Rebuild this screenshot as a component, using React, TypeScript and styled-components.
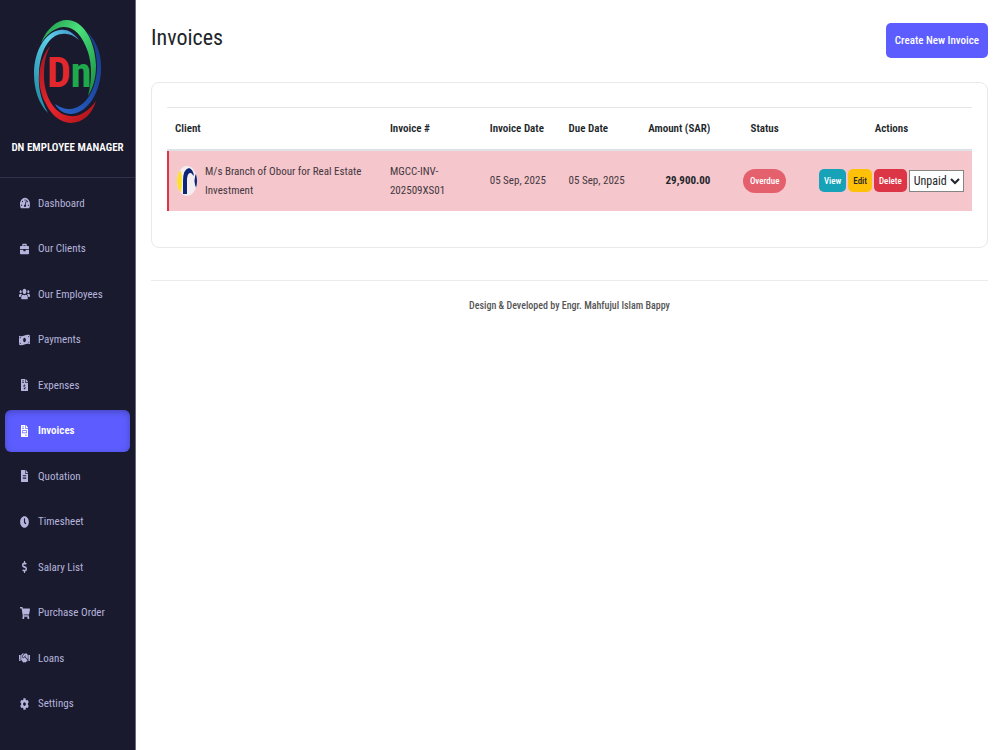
import React from 'react';
import styled, { createGlobalStyle, css } from 'styled-components';
import type { IconType } from 'react-icons';
import {
  FaTachometerAlt,
  FaBriefcase,
  FaUsers,
  FaMoneyBillWave,
  FaFileInvoiceDollar,
  FaFileInvoice,
  FaFileAlt,
  FaClock,
  FaDollarSign,
  FaShoppingCart,
  FaHandshake,
  FaCog,
} from 'react-icons/fa';

const GlobalStyle = createGlobalStyle`
  *, *::before, *::after { box-sizing: border-box; }
  body {
    margin: 0;
    background: #fff;
    color: #212529;
    font-family: 'Roboto Condensed', Roboto, sans-serif;
    font-size: 11px;
    line-height: 19px;
  }
  button, select { font-family: inherit; }
`;

const Shell = styled.div`
  display: flex;
  min-height: 100vh;
`;

const Sidebar = styled.aside`
  display: flex;
  flex-direction: column;
  flex: 0 0 136px;
  background: #1a1a2e;
  border-right: 1px solid #6c6c78;
`;

const Brand = styled.div`
  display: flex;
  flex-direction: column;
  align-items: center;
  gap: 13px;
  height: 178px;
  padding-top: 20px;
  border-bottom: 1px solid #30304a;
`;

const BrandName = styled.div`
  color: #fff;
  line-height: 24px;
  font-weight: 600;
  white-space: nowrap;
`;

const Nav = styled.nav`
  display: flex;
  flex: 1;
  flex-direction: column;
  justify-content: space-between;
  padding: 4px 5px 25px;
`;

const NavLink = styled.a<{ $active?: boolean }>`
  display: flex;
  align-items: center;
  gap: 8px;
  height: 42px;
  padding-left: 14px;
  border-radius: 6px;
  color: #b4b4dc;
  text-decoration: none;
  ${({ $active }) =>
    $active &&
    css`
      background: #5d5dff;
      box-shadow: inset 0 2px 6px rgba(0, 0, 0, 0.25);
      color: #fff;
      font-weight: 600;
    `}
`;

const IconSlot = styled.span<{ $width: number }>`
  display: flex;
  justify-content: center;
  width: 11px;

  svg {
    width: ${({ $width }) => $width}px;
    height: 12px;
  }
`;

const Main = styled.main`
  flex: 1;
  min-width: 0;
  padding: 23px 12px 23px 15px;
`;

const PageHeader = styled.header`
  display: flex;
  justify-content: space-between;
  align-items: flex-start;
  margin-bottom: 24px;
`;

const Title = styled.h1`
  margin: 0;
  font-size: 22px;
  line-height: 29px;
  font-weight: 400;
`;

const PrimaryButton = styled.button`
  height: 35px;
  padding: 0 9px;
  border: 0;
  border-radius: 5px;
  background: #5d5dff;
  color: #fff;
  font-size: 11px;
  font-weight: 500;
`;

const Card = styled.section`
  padding: 24px 15px 36px;
  border: 1px solid #e9e9ec;
  border-radius: 8px;
`;

const Table = styled.table`
  width: 100%;
  border-collapse: collapse;
  table-layout: fixed;
`;

type Align = 'left' | 'right' | 'center';

const HeadCell = styled.th<{ $align?: Align; $width?: string }>`
  width: ${({ $width = 'auto' }) => $width};
  height: 42px;
  padding: 0 8px;
  border-top: 1px solid #e3e5e8;
  border-bottom: 2px solid #dee2e6;
  font-weight: 600;
  text-align: ${({ $align = 'left' }) => $align};
  white-space: nowrap;
`;

const Cell = styled.td<{ $align?: Align; $strong?: boolean }>`
  height: 61px;
  padding: 0 8px;
  background: #f5c6cb;
  color: ${({ $strong }) => ($strong ? '#212529' : '#43383f')};
  font-weight: ${({ $strong }) => ($strong ? 700 : 400)};
  text-align: ${({ $align = 'left' }) => $align};
  white-space: nowrap;

  &:first-child { box-shadow: inset 2px 0 #dc3545; }
`;

const Client = styled.div`
  display: flex;
  align-items: center;
  gap: 8px;
  padding-left: 2px;

  svg { flex-shrink: 0; }
`;

const Badge = styled.span`
  display: inline-block;
  padding: 0 7px;
  border-radius: 12px;
  background: #e4606d;
  color: #fff;
  font-size: 9px;
  line-height: 24px;
  font-weight: 500;
`;

const Actions = styled.div`
  display: flex;
  align-items: center;
  gap: 2px;
`;

const ActionButton = styled.button<{ $bg: string; $fg?: string }>`
  height: 23px;
  padding: 0 5px;
  border: 0;
  border-radius: 5px;
  background: ${({ $bg }) => $bg};
  color: ${({ $fg = '#fff' }) => $fg};
  font-size: 9px;
  font-weight: 500;
`;

const StatusSelect = styled.select`
  width: 57px;
  height: 22px;
  padding: 0;
  border: 1px solid #858585;
  border-radius: 0;
  background: #fff;
  color: #212529;
  font-size: 12px;
`;

const Footer = styled.footer`
  margin-top: 32px;
  padding-top: 15px;
  border-top: 1px solid #e9ebed;
  color: #555;
  font-size: 10px;
  font-weight: 500;
  text-align: center;
`;

const navItems: { label: string; icon: IconType; width: number }[] = [
  { label: 'Dashboard', icon: FaTachometerAlt, width: 10 },
  { label: 'Our Clients', icon: FaBriefcase, width: 9 },
  { label: 'Our Employees', icon: FaUsers, width: 11 },
  { label: 'Payments', icon: FaMoneyBillWave, width: 11 },
  { label: 'Expenses', icon: FaFileInvoiceDollar, width: 7 },
  { label: 'Invoices', icon: FaFileInvoice, width: 7 },
  { label: 'Quotation', icon: FaFileAlt, width: 7 },
  { label: 'Timesheet', icon: FaClock, width: 9 },
  { label: 'Salary List', icon: FaDollarSign, width: 5 },
  { label: 'Purchase Order', icon: FaShoppingCart, width: 10 },
  { label: 'Loans', icon: FaHandshake, width: 11 },
  { label: 'Settings', icon: FaCog, width: 9 },
];

const BrandLogo = () => (
  <svg width="68" height="103" viewBox="0 0 68 103" role="img" aria-label="DN logo">
    <defs>
      <linearGradient id="green" x1="0" y1="0" x2="1" y2="1">
        <stop offset="0" stopColor="#1c8f45" />
        <stop offset="0.4" stopColor="#4be07c" />
        <stop offset="1" stopColor="#128a3c" />
      </linearGradient>
      <linearGradient id="cyan" x1="1" y1="0" x2="0" y2="1">
        <stop offset="0" stopColor="#3d8fc4" />
        <stop offset="0.4" stopColor="#5fd0ea" />
        <stop offset="1" stopColor="#127f96" />
      </linearGradient>
      <linearGradient id="red" x1="0" y1="0" x2="1" y2="1">
        <stop offset="0" stopColor="#a01420" />
        <stop offset="0.5" stopColor="#e8262c" />
        <stop offset="1" stopColor="#a81218" />
      </linearGradient>
      <linearGradient id="blue" x1="1" y1="0" x2="0" y2="1">
        <stop offset="0" stopColor="#163a86" />
        <stop offset="0.6" stopColor="#2050b0" />
        <stop offset="1" stopColor="#2b66c8" />
      </linearGradient>
    </defs>
    <path d="M53 12C63 21 68 35 67 52C65 78 50 94 37 94C30 94 24 90 21 84C27 88 31 89 36 89C50 88 62 72 63 48C63 34 60 22 53 12Z" fill="url(#blue)" />
    <path d="M16 26C3 42 2 66 12 84C17 94 25 102 36 103C49 103 58 94 62 81C54 92 45 97 36 96C21 95 9 76 10 53C10 42 12 35 16 26Z" fill="url(#red)" />
    <path d="M7 23C13 8 23 0 33 0C49 0 61 20 62 45C62 59 59 68 54 76C58 60 58 45 54 32C48 15 40 6 29 7C20 8 13 14 7 23Z" fill="url(#green)" />
    <path d="M45 20C38 11 32 9 26 10C11 12 0 31 0 54C0 70 5 84 14 93C6 78 4 66 5 53C6 31 15 15 28 14C34 13 39 15 45 20Z" fill="url(#cyan)" />
    <text x="13" y="67" fontSize="42" fontWeight="700">
      <tspan fill="#e2272d">D</tspan>
      <tspan fill="#1fa84c">n</tspan>
    </text>
  </svg>
);

const ClientLogo = () => (
  <svg width="20" height="32" viewBox="0 0 20 32" role="img" aria-label="Client logo">
    <defs>
      <clipPath id="oval"><ellipse cx="10" cy="16" rx="10" ry="15" /></clipPath>
    </defs>
    <ellipse cx="10" cy="16" rx="10" ry="15" fill="#f4eef1" />
    <g clipPath="url(#oval)">
      <path d="M0 6H4Q6 16 4 27H0Z" fill="#fde02f" />
      <path d="M6 29V16Q6 4 12 3Q16 4 17 11L14 8Q10 7 10 16V29Z" fill="#0d2676" />
      <path d="M20 6Q15 16 20 25Z" fill="#0d2676" />
    </g>
  </svg>
);

export default function App() {
  return (
    <>
      <GlobalStyle />
      <Shell>
        <Sidebar>
          <Brand>
            <BrandLogo />
            <BrandName>DN EMPLOYEE MANAGER</BrandName>
          </Brand>
          <Nav aria-label="Main">
            {navItems.map(({ label, icon: Icon, width }) => (
              <NavLink key={label} href="#" $active={label === 'Invoices'}>
                <IconSlot $width={width}>
                  <Icon preserveAspectRatio="none" />
                </IconSlot>
                {label}
              </NavLink>
            ))}
          </Nav>
        </Sidebar>
        <Main>
          <PageHeader>
            <Title>Invoices</Title>
            <PrimaryButton type="button">Create New Invoice</PrimaryButton>
          </PageHeader>
          <Card>
            <Table>
              <thead>
                <tr>
                  <HeadCell $width="26.7%">Client</HeadCell>
                  <HeadCell $width="12.4%">Invoice #</HeadCell>
                  <HeadCell $width="9.8%">Invoice Date</HeadCell>
                  <HeadCell $width="9.4%">Due Date</HeadCell>
                  <HeadCell $width="10.2%" $align="right">Amount (SAR)</HeadCell>
                  <HeadCell $width="11.5%" $align="center">Status</HeadCell>
                  <HeadCell $align="center">Actions</HeadCell>
                </tr>
              </thead>
              <tbody>
                <tr>
                  <Cell>
                    <Client>
                      <ClientLogo />
                      <span>M/s Branch of Obour for Real Estate<br />Investment</span>
                    </Client>
                  </Cell>
                  <Cell>MGCC-INV-<br />202509XS01</Cell>
                  <Cell>05 Sep, 2025</Cell>
                  <Cell>05 Sep, 2025</Cell>
                  <Cell $align="right" $strong>29,900.00</Cell>
                  <Cell $align="center"><Badge>Overdue</Badge></Cell>
                  <Cell>
                    <Actions>
                      <ActionButton type="button" $bg="#17a2b8">View</ActionButton>
                      <ActionButton type="button" $bg="#ffc107" $fg="#212529">Edit</ActionButton>
                      <ActionButton type="button" $bg="#dc3545">Delete</ActionButton>
                      <StatusSelect aria-label="Payment status" defaultValue="Unpaid">
                        <option>Unpaid</option>
                        <option>Paid</option>
                      </StatusSelect>
                    </Actions>
                  </Cell>
                </tr>
              </tbody>
            </Table>
          </Card>
          <Footer>Design &amp; Developed by Engr. Mahfujul Islam Bappy</Footer>
        </Main>
      </Shell>
    </>
  );
}
